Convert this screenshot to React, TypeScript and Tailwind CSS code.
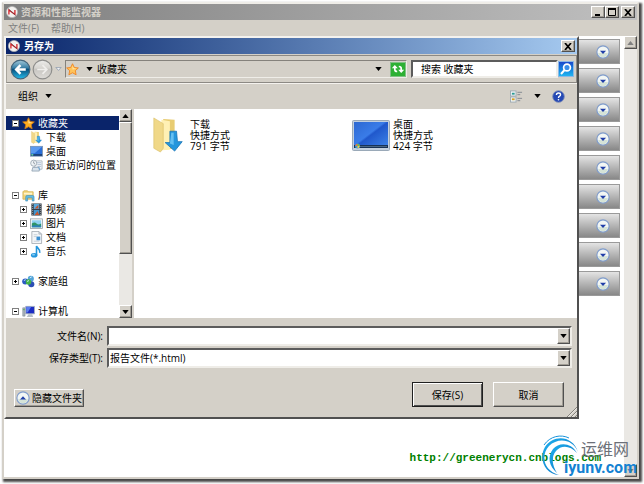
import { useState } from 'react';
import type { ReactNode } from 'react';

const raised =
  'border border-t-white border-l-white border-r-[#505050] border-b-[#505050] shadow-[inset_-1px_-1px_0_#a09c94] bg-[#d4d0c8]';
const sunken =
  'border-2 border-t-[#5c5c5c] border-l-[#5c5c5c] border-r-[#efede8] border-b-[#efede8] bg-white';

function AppIcon() {
  return (
    <svg viewBox="0 0 14 14" className="w-3 h-3 shrink-0">
      <circle cx="7" cy="7" r="6.5" fill="#f4f2f0" stroke="#b5b5b5" strokeWidth="0.8" />
      <path d="M3.4 9.800V4.600l7 5.200V4.600" fill="none" stroke="#d31f26" strokeWidth="1.500" />
      <path d="M2.800 3l8.400 8" stroke="#4b4b4b" strokeWidth="0.7" />
    </svg>
  );
}

function Caret({ up = false, className = 'text-black' }: { up?: boolean; className?: string }) {
  return (
    <svg viewBox="0 0 8 5" className={`w-[7px] h-1 shrink-0 ${className}`}>
      <path d={up ? 'M0 5h8L4 0z' : 'M0 0h8L4 5z'} fill="currentColor" />
    </svg>
  );
}

function RoundCaret({ up = false }: { up?: boolean }) {
  return (
    <svg viewBox="0 0 16 16" className="w-[14px] h-[14px] shrink-0">
      <circle cx="8" cy="8" r="7" fill="#f2f6f4" stroke="#7f9ccc" strokeWidth="1.3" />
      <path d="M2.5 9a5.5 5 0 0 0 11 0z" fill="#c9dccb" opacity="0.7" />
      <path d={up ? 'M4.5 9.7h7L8 6z' : 'M4.5 6.5h7L8 10.2z'} fill="#203fa8" />
    </svg>
  );
}

function Star({ glow = false }: { glow?: boolean }) {
  return (
    <svg viewBox="0 0 14 14" className="w-[13px] h-[13px] shrink-0">
      <path
        d="M7 .8l1.9 4 4.4.5-3.3 3 .9 4.4L7 10.5l-3.9 2.2.9-4.4-3.3-3 4.4-.5z"
        fill={glow ? '#ffc35a' : '#ffad20'}
        stroke={glow ? '#f08018' : '#c97818'}
        strokeWidth="0.9"
      />
      <path d="M7 2.8l1.2 2.9 3 .4-4.2 1z" fill="#ffe6a6" />
    </svg>
  );
}

function DownloadFolder({ className }: { className: string }) {
  return (
    <svg viewBox="0 0 32 38" className={`shrink-0 ${className}`}>
      <path d="M11 2l12 1v30l-14 2z" fill="#e8cc72" />
      <path d="M9 3l9 1.5v30L9 35z" fill="#fff0b4" />
      <path d="M1 1l10 6v26l-3 4-7-4z" fill="#f0d888" stroke="#d8bb62" strokeWidth="0.6" />
      <path d="M18 15h7l1 11h5l-8 10-10-9h5z" fill="#2596dc" stroke="#1571b4" strokeWidth="0.8" />
      <path d="M19.5 16.5h2.5v13l-4-1.500z" fill="#64c0f2" />
    </svg>
  );
}

function DesktopSmall() {
  return (
    <svg viewBox="0 0 14 14" className="w-[13px] h-[13px] shrink-0">
      <rect x="0.5" y="1.500" width="13" height="10.500" fill="#2a6ed8" stroke="#8298b4" />
      <path d="M1 2h12L5 9H1z" fill="#5b9af0" />
      <path d="M1 10h12v1.500H1z" fill="#16345c" />
      <circle cx="2.500" cy="10.500" r="1.200" fill="#5ec8a0" />
    </svg>
  );
}

function DesktopLarge() {
  return (
    <svg viewBox="0 0 38 31" className="w-[38px] h-[31px] shrink-0">
      <defs>
        <linearGradient id="screen" x1="0" y1="0" x2="1" y2="1">
          <stop offset="0" stopColor="#2c68d2" />
          <stop offset="0.45" stopColor="#3a7ce8" />
          <stop offset="0.5" stopColor="#2058cc" />
          <stop offset="1" stopColor="#3f86ea" />
        </linearGradient>
      </defs>
      <rect x="0.5" y="0.5" width="37" height="30" rx="1" fill="#c3d0de" stroke="#9aa9b8" />
      <rect x="2" y="2" width="34" height="26" fill="url(#screen)" />
      <path d="M2 25h34v3H2z" fill="#173256" />
      <path d="M6 26.500h29" stroke="#5d7d98" strokeWidth="0.7" />
      <circle cx="5.500" cy="26" r="2.500" fill="#3f9bd0" />
      <path d="M5.500 26V23.800a2.200 2.200 0 0 0-2.200 2.200z" fill="#ee7042" />
      <path d="M5.500 26h2.200a2.200 2.200 0 0 1-2.200 2.200z" fill="#f3ce48" />
      <path d="M5.500 26h2.200a2.200 2.200 0 0 0-2.200-2.200z" fill="#74bc42" />
    </svg>
  );
}

function RecentIcon() {
  return (
    <svg viewBox="0 0 14 14" className="w-[13px] h-[13px] shrink-0">
      <path d="M5 2h8v9H5z" fill="#f1f4f8" stroke="#a2adb8" strokeWidth="0.8" />
      <path d="M7 4h5M8 6h4M8 8h4" stroke="#9fb5cc" strokeWidth="0.8" />
      <path d="M3 9h7v4H2z" fill="#d9e3ec" stroke="#8799aa" strokeWidth="0.8" />
      <circle cx="4" cy="4.500" r="3.300" fill="#eef2f5" stroke="#99a5b0" strokeWidth="0.9" />
      <path d="M4 2.500v2l1.500 1" fill="none" stroke="#66727e" strokeWidth="0.7" />
      <path d="M9 9l2 3" stroke="#65a6da" />
    </svg>
  );
}

function LibraryIcon() {
  return (
    <svg viewBox="0 0 14 14" className="w-[13px] h-[13px] shrink-0">
      <path d="M1 3l1-1h4l1 1h5v8H1z" fill="#f2d478" stroke="#cfab48" strokeWidth="0.8" />
      <path d="M2 4h9v2H2z" fill="#fff4c8" />
      <path d="M4 13V8.500q0-1.500 1.500-1.500h6q1.500 0 1.500 1.500V13h-2V9.500H6V13z" fill="#62bce4" stroke="#3888b4" strokeWidth="0.6" />
    </svg>
  );
}

function VideoIcon() {
  return (
    <svg viewBox="0 0 14 14" className="w-[13px] h-[13px] shrink-0">
      <rect x="1.500" y="0.5" width="11" height="13" fill="#343c44" />
      <rect x="4" y="1" width="6" height="5.500" fill="#58a8dc" />
      <rect x="4" y="7.500" width="6" height="5.500" fill="#4294cc" />
      <path d="M5 6l4-4v4zM5 13l3-4 2 4z" fill="#c7562e" />
      <path d="M2.800 1v12M11.200 1v12" stroke="#d4dce2" strokeWidth="0.7" strokeDasharray="1 1.200" />
    </svg>
  );
}

function PictureIcon() {
  return (
    <svg viewBox="0 0 14 14" className="w-[13px] h-[13px] shrink-0">
      <rect x="0.5" y="2" width="13" height="10.500" fill="#f5f7f8" stroke="#8d979e" strokeWidth="0.8" />
      <path d="M2 3.500h10v7.500H2z" fill="#8ed0f0" />
      <path d="M2 7q3-2 5 0t5 0v4H2z" fill="#2f9468" />
      <path d="M2 9.500q5-1.500 10 0V11H2z" fill="#2c80bc" />
    </svg>
  );
}

function DocumentIcon() {
  return (
    <svg viewBox="0 0 14 14" className="w-[13px] h-[13px] shrink-0">
      <path d="M2 .5h7.500l3 3v10H2z" fill="#f4f6f8" stroke="#98a0a8" strokeWidth="0.8" />
      <path d="M9.500.5v3h3z" fill="#cfd8e0" stroke="#98a0a8" strokeWidth="0.5" />
      <path d="M4 4h4M4 6h3M4 11h6" stroke="#b4bec8" strokeWidth="0.7" />
      <path d="M7 6h4v4H7z" fill="#3c8fd0" />
    </svg>
  );
}

function MusicIcon() {
  return (
    <svg viewBox="0 0 14 14" className="w-[13px] h-[13px] shrink-0">
      <ellipse cx="4.500" cy="11" rx="3.500" ry="2.500" fill="#2496dc" />
      <path d="M7 11V1c.5 2.500 4.500 3 3.500 7.500" fill="none" stroke="#2496dc" strokeWidth="1.700" />
      <ellipse cx="3.800" cy="10.400" rx="1.600" ry="0.900" fill="#86ccf4" />
    </svg>
  );
}

function HomegroupIcon() {
  return (
    <svg viewBox="0 0 14 14" className="w-[13px] h-[13px] shrink-0">
      <circle cx="3.500" cy="7" r="3.300" fill="#2a58c4" />
      <circle cx="9.500" cy="4" r="3.300" fill="#54a4d8" />
      <circle cx="10" cy="10" r="3.300" fill="#2c4fb4" />
      <circle cx="7" cy="7.500" r="3" fill="#44b448" />
      <path d="M2 6l2-1M8.500 3l2-1M5.500 7l2-1" stroke="#d7f0ff" />
    </svg>
  );
}

function ComputerIcon() {
  return (
    <svg viewBox="0 0 14 14" className="w-[13px] h-[13px] shrink-0">
      <path d="M.8 3h2.500v9H.8z" fill="#aab5bc" stroke="#69757e" strokeWidth="0.5" />
      <path d="M1 5h2" stroke="#55b455" />
      <path d="M4 1.500h9.500v8H4z" fill="#1c2cc4" stroke="#a8b2c0" />
      <path d="M4.500 2H10L6 8H4.500z" fill="#5a7cf0" />
      <path d="M7 10h4l1 3H5z" fill="#b5bec6" />
    </svg>
  );
}

function BackIcon({ disabled = false }: { disabled?: boolean }) {
  return (
    <svg viewBox="0 0 22 22" className="w-[21px] h-[21px]">
      <defs>
        <linearGradient id={disabled ? 'forward' : 'back'} x1="0" y1="0" x2="0" y2="1">
          <stop offset="0" stopColor={disabled ? '#ececea' : '#a4cadb'} />
          <stop offset="0.4" stopColor={disabled ? '#d8d6d2' : '#3a80a6'} />
          <stop offset="0.5" stopColor={disabled ? '#c8c6c2' : '#0b527f'} />
          <stop offset="1" stopColor={disabled ? '#dedcd8' : '#22bcec'} />
        </linearGradient>
      </defs>
      <circle
        cx="11"
        cy="11"
        r="9.800"
        fill={`url(#${disabled ? 'forward' : 'back'})`}
        stroke={disabled ? '#8e8e8c' : '#44667c'}
        strokeWidth="1.200"
      />
      <path
        d={disabled ? 'M5.500 11H15M11 6.500l4.500 4.500-4.500 4.500' : 'M16.500 11H7M11 6.500L6.500 11l4.500 4.500'}
        fill="none"
        stroke={disabled ? '#efeeec' : '#ffffff'}
        strokeWidth={disabled ? '1.800' : '2.600'}
      />
    </svg>
  );
}

function Expander({ open }: { open: boolean }) {
  return (
    <svg viewBox="0 0 7 7" className="w-[7px] h-[7px] shrink-0">
      <rect x="0.5" y="0.5" width="6" height="6" fill="#fff" stroke="#808080" />
      <path d={open ? 'M2 3.500h3' : 'M2 3.500h3M3.500 2v3'} stroke="#000" />
    </svg>
  );
}

type TreeItem = {
  label: string;
  icon: ReactNode;
  child?: boolean;
  open?: boolean;
};

const groups: TreeItem[][] = [
  [
    { label: '收藏夹', icon: <Star />, open: true },
    { label: '下载', icon: <DownloadFolder className="w-[13px] h-[13px]" />, child: true },
    { label: '桌面', icon: <DesktopSmall />, child: true },
    { label: '最近访问的位置', icon: <RecentIcon />, child: true },
  ],
  [
    { label: '库', icon: <LibraryIcon />, open: true },
    { label: '视频', icon: <VideoIcon />, child: true, open: false },
    { label: '图片', icon: <PictureIcon />, child: true, open: false },
    { label: '文档', icon: <DocumentIcon />, child: true, open: false },
    { label: '音乐', icon: <MusicIcon />, child: true, open: false },
  ],
  [{ label: '家庭组', icon: <HomegroupIcon />, open: false }],
  [{ label: '计算机', icon: <ComputerIcon />, open: true }],
];

const files = [
  { name: '下载', size: '791 字节', icon: <DownloadFolder className="w-[38px] h-9" /> },
  { name: '桌面', size: '424 字节', icon: <DesktopLarge /> },
];

const sections = ['s1', 's2', 's3', 's4', 's5', 's6', 's7', 's8', 's9'];

function Sidebar() {
  const [selected, setSelected] = useState('收藏夹');

  return (
    <div className="flex w-[126px] h-[209px] shrink-0 bg-white">
      <nav className="flex-1 min-w-0 overflow-hidden pt-[7px] flex flex-col gap-4">
        {groups.map((group) => (
          <ul key={group[0].label}>
            {group.map((item) => (
              <li key={item.label}>
                <button
                  type="button"
                  onClick={() => setSelected(item.label)}
                  className={`flex items-center w-full h-[14px] gap-[3px] whitespace-nowrap ${
                    item.child ? 'pl-[14px]' : 'pl-[6px]'
                  } ${selected === item.label ? 'bg-[#0a246a] text-white' : ''}`}
                >
                  {item.open === undefined ? (
                    <span className="w-[7px] shrink-0" />
                  ) : (
                    <Expander open={item.open} />
                  )}
                  {item.icon}
                  <span>{item.label}</span>
                </button>
              </li>
            ))}
          </ul>
        ))}
      </nav>
      <div className="flex flex-col w-[13px] bg-[#eae8e4]">
        <button type="button" aria-label="向上" className={`flex items-center justify-center h-[13px] ${raised}`}>
          <Caret up />
        </button>
        <div className={`h-[132px] ${raised}`} />
        <button type="button" aria-label="向下" className={`mt-auto flex items-center justify-center h-[13px] ${raised}`}>
          <Caret />
        </button>
      </div>
    </div>
  );
}

function SaveDialog() {
  const [fileName, setFileName] = useState('');
  const [search, setSearch] = useState('');

  return (
    <div
      role="dialog"
      aria-label="另存为"
      className="absolute top-0 left-0 right-[58px] bg-[#d4d0c8] border-2 border-t-[#f4f2ee] border-l-[#f4f2ee] border-r-[#505050] border-b-[#505050]"
    >
      <div className="flex items-center h-4 pl-[2px] pr-[2px] gap-1 bg-linear-to-r from-[#0a246a] to-[#a6caf0] text-white font-bold">
        <AppIcon />
        <span className="flex-1">另存为</span>
        <button type="button" aria-label="关闭" className={`w-[14px] h-3 flex items-center justify-center ${raised}`}>
          <svg viewBox="0 0 8 7" className="w-2 h-[7px]">
            <path d="M1 0l6 7M7 0L1 7" stroke="#000" strokeWidth="1.700" />
          </svg>
        </button>
      </div>

      <div className="flex items-center h-7 mt-px pl-[3px] pr-[2px] border border-t-[#8c8984] border-l-[#a8a49c] border-r-[#8c8984] border-b-[#8c8984] shadow-[0_1px_0_#f4f2ee]">
        <button type="button" aria-label="后退">
          <BackIcon />
        </button>
        <button type="button" aria-label="前进" disabled className="ml-px">
          <BackIcon disabled />
        </button>
        <button type="button" aria-label="最近" className="ml-[2px] mr-[3px]">
          <svg viewBox="0 0 8 5" className="w-[7px] h-1">
            <path d="M.7.5h6.600L4 4.300z" fill="#f2f2f2" stroke="#8494a8" strokeWidth="0.9" />
          </svg>
        </button>
        <div className="flex flex-1 items-center h-[18px] border border-t-[#85827c] border-l-[#85827c] border-r-[#efede8] border-b-[#efede8]">
          <Star glow />
          <button type="button" aria-label="位置" className="flex ml-[7px] mr-1">
            <Caret />
          </button>
          <span className="flex-1">收藏夹</span>
          <button type="button" aria-label="展开" className="flex mr-2">
            <Caret />
          </button>
          <button type="button" aria-label="刷新" className="flex items-center justify-center w-4 h-[15px] bg-[#2db034] border border-[#7fc184]">
            <svg viewBox="0 0 14 12" className="w-[14px] h-3">
              <path d="M3.800 5v1.500q0 2 2.400 2M10.200 7V5.500q0-2-2.400-2" fill="none" stroke="#fff" strokeWidth="1.700" />
              <path d="M.8 5.200L3.800 2l3 3.200zM7.200 6.800l3 3.200 3-3.200z" fill="#fff" />
            </svg>
          </button>
        </div>
        <input
          type="text"
          aria-label="搜索"
          placeholder="搜索 收藏夹"
          value={search}
          onChange={(e) => setSearch(e.target.value)}
          className={`w-[147px] h-[18px] ml-1 pl-2 placeholder:text-black placeholder:opacity-100 outline-none ${sunken}`}
        />
        <button type="button" aria-label="开始搜索" className="flex items-center justify-center w-4 h-4 bg-linear-to-b from-[#1c48cc] to-[#22b4f0] border border-[#8cb8e4]">
          <svg viewBox="0 0 14 14" className="w-[14px] h-[14px]">
            <circle cx="8" cy="5.500" r="3.400" fill="#3a8ee8" stroke="#fff" strokeWidth="1.700" />
            <path d="M5.500 8L2 12" stroke="#fff" strokeWidth="2" />
          </svg>
        </button>
      </div>

      <div className="flex items-center h-[26px] pl-3 pr-3">
        <button type="button" className="flex items-center gap-[7px]">
          组织
          <Caret />
        </button>
        <button type="button" aria-label="更改视图" className="ml-auto flex items-center gap-[11px]">
          <svg viewBox="0 0 14 13" className="w-[13px] h-[13px]">
            <rect x="0.5" y="0.5" width="6" height="5.500" fill="#eef4f6" stroke="#9eaab2" />
            <rect x="0.5" y="7" width="6" height="5.500" fill="#eef4f6" stroke="#9eaab2" />
            <path d="M2 3.500h3" stroke="#2a9a94" strokeWidth="2" />
            <path d="M2 9.500h3" stroke="#d8a020" strokeWidth="2" />
            <path d="M8 2h5M8 4.500h3M8 8.500h5M8 11h3" stroke="#7f8790" />
          </svg>
          <Caret />
        </button>
        <button type="button" aria-label="帮助" className="ml-[11px]">
          <svg viewBox="0 0 14 14" className="w-[13px] h-[13px]">
            <circle cx="7" cy="7" r="6.300" fill="#2448b4" stroke="#8794b8" />
            <path d="M4.800 5.500q0-2.200 2.200-2.200t2.200 1.900q0 1.200-1.300 1.700Q7 7.300 7 8.500" fill="none" stroke="#fff" strokeWidth="1.500" />
            <circle cx="7" cy="10.500" r="0.900" fill="#fff" />
          </svg>
        </button>
      </div>

      <div className="flex bg-white">
        <Sidebar />
        <div className="w-[2px] bg-[#d4d0c8]" />
        <div className="flex-1 grid grid-cols-[203px_1fr] content-start pt-2 pl-[15px]">
          {files.map((file) => (
            <button key={file.name} type="button" className="flex items-center gap-[3px] text-left h-9">
              {file.icon}
              <span className="flex flex-col leading-[11px]">
                <span>{file.name}</span>
                <span>快捷方式</span>
                <span>{file.size}</span>
              </span>
            </button>
          ))}
        </div>
      </div>

      <form className="pt-2 pr-[5px]" onSubmit={(e) => e.preventDefault()}>
        <div className="grid grid-cols-[97px_1fr] gap-x-1 gap-y-[2px] items-center">
          <label htmlFor="file-name" className="text-right">
            文件名(N):
          </label>
          <div className={`flex h-5 ${sunken}`}>
            <input
              id="file-name"
              type="text"
              value={fileName}
              onChange={(e) => setFileName(e.target.value)}
              className="flex-1 min-w-0 px-px outline-none"
            />
            <button type="button" aria-label="历史记录" className={`flex items-center justify-center w-[13px] ${raised}`}>
              <Caret />
            </button>
          </div>
          <label htmlFor="file-type" className="text-right">
            保存类型(T):
          </label>
          <div className={`relative h-5 ${sunken}`}>
            <select id="file-type" className="block w-full h-full appearance-none px-px outline-none">
              <option>报告文件(*.html)</option>
            </select>
            <span className={`absolute inset-y-0 right-0 flex items-center justify-center w-[13px] pointer-events-none ${raised}`}>
              <Caret />
            </span>
          </div>
        </div>

        <div className="flex items-end gap-[10px] pt-[14px] pb-[10px] pl-2 pr-2">
          <button type="button" className={`flex items-center h-[18px] w-[70px] gap-[2px] pl-px whitespace-nowrap ${raised}`}>
            <RoundCaret up />
            隐藏文件夹
          </button>
          <button type="submit" className="ml-auto w-[71px] h-[25px] bg-[#d4d0c8] border border-[#202020] shadow-[inset_1px_1px_0_#fff,inset_-1px_-1px_0_#505050]">
            保存(S)
          </button>
          <button type="button" className={`w-[71px] h-[25px] ${raised}`}>
            取消
          </button>
        </div>
      </form>
      <svg viewBox="0 0 10 10" className="absolute right-0 bottom-0 w-[10px] h-[10px]">
        <path d="M0 10L10 0M4 10l6-6M8 10l2-2" stroke="#85827c" />
        <path d="M1.200 10L10 1.200M5.200 10L10 5.200" stroke="#fff" strokeWidth="0.6" />
      </svg>
    </div>
  );
}

function SiteLogo() {
  return (
    <div className="absolute right-0 bottom-0 flex items-end pointer-events-none">
      <svg viewBox="0 0 40 42" className="w-10 h-[42px] -mr-[17px]">
        <defs>
          <linearGradient id="ring" x1="0" y1="0" x2="1" y2="1">
            <stop offset="0" stopColor="#1fb0ee" />
            <stop offset="1" stopColor="#0a6fc0" />
          </linearGradient>
        </defs>
        <path d="M37 17C32 4 17 2 8 11-1 21 3 36 18 40 4 39-3 24 4 12 12-1 32 0 37 17z" fill="url(#ring)" />
        <path d="M36 18C30 7 18 7 12 14c-6 8-4 17 4 24-5-8-6-16-1-22 5-6 14-6 21 2z" fill="url(#ring)" />
        <path d="M3 10C9 1 20-1 28 3" fill="none" stroke="#1a94dc" strokeWidth="1" />
      </svg>
      <div className="flex flex-col font-[Roboto,'Noto_Sans_CJK_SC',sans-serif]">
        <span className="pl-[17px] text-[16px] leading-[18px] text-[#6c7078]">运维网</span>
        <span className="text-[16px] leading-[18px] font-bold text-[#1482d2]">iyunv.com</span>
      </div>
    </div>
  );
}

export default function App() {
  return (
    <div className="h-screen bg-white pt-[2px] pl-[2px] pr-[5px] pb-[5px] overflow-hidden text-[10px] leading-[14px] text-black font-['Open_Sans','Noto_Sans_CJK_SC',sans-serif]">
      <div className="flex flex-col h-full border-2 border-t-[#efede8] border-l-[#d4d0c8] border-r-[#d4d0c8] border-b-[#d4d0c8] bg-[#d4d0c8] shadow-[2px_2px_2px_1px_#484848]">
        <div className="flex items-center h-4 pl-[2px] pr-[2px] gap-[3px] bg-linear-to-r from-[#808080] to-[#c0c0c0] text-[#d4d0c8] font-bold">
          <AppIcon />
          <span className="flex-1">资源和性能监视器</span>
          <div className="flex">
            <button type="button" aria-label="最小化" className={`w-[14px] h-3 flex items-end justify-center pb-px ${raised}`}>
              <svg viewBox="0 0 8 7" className="w-2 h-[7px]">
                <path d="M1 6h5" stroke="#000" strokeWidth="2" />
              </svg>
            </button>
            <button type="button" aria-label="最大化" className={`w-[14px] h-3 flex items-center justify-center ${raised}`}>
              <svg viewBox="0 0 8 8" className="w-2 h-2">
                <path d="M.5 1h7v6.500h-7z" fill="none" stroke="#000" />
                <path d="M0 1h8" stroke="#000" strokeWidth="2" />
              </svg>
            </button>
            <button type="button" aria-label="关闭" className={`w-[14px] h-3 ml-[2px] flex items-center justify-center ${raised}`}>
              <svg viewBox="0 0 8 7" className="w-2 h-[7px]">
                <path d="M1 0l6 7M7 0L1 7" stroke="#000" strokeWidth="1.700" />
              </svg>
            </button>
          </div>
        </div>
        <div className="flex h-4 items-center pl-1 gap-3 text-[#808080]">
          <button type="button">文件(F)</button>
          <button type="button">帮助(H)</button>
        </div>

        <main className="relative flex flex-1 min-h-0 bg-white">
          <div className="flex-1 flex flex-col gap-1 pt-[3px] pr-1">
            {sections.map((id) => (
              <button
                key={id}
                type="button"
                aria-label="展开"
                className="flex items-center justify-end h-[25px] pr-[9px] border border-[#9a9a9a] bg-linear-to-b from-[#e4e4e4] to-[#888888]"
              >
                <RoundCaret />
              </button>
            ))}
          </div>
          <div className="flex flex-col w-[13px] bg-[#eae8e4]">
            <button type="button" aria-label="向上" className={`flex items-center justify-center h-[13px] ${raised}`}>
              <Caret up className="text-[#808080]" />
            </button>
            <button type="button" aria-label="向下" className={`mt-auto flex items-center justify-center h-[13px] ${raised}`}>
              <Caret className="text-[#808080]" />
            </button>
          </div>
          <a
            href="http://greenerycn.cnblogs.com"
            className="absolute right-9 bottom-3 font-['Liberation_Mono',monospace] text-[11px] font-bold text-[#008000]"
          >
            http://greenerycn.cnblogs.com
          </a>
          <SaveDialog />
          <SiteLogo />
        </main>
      </div>
    </div>
  );
}
